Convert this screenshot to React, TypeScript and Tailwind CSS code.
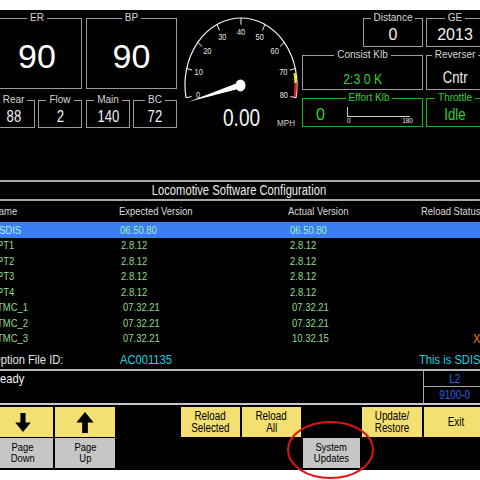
import React from 'react';

// Reusable bordered panel with a centred caption in the top border
type BoxProps = {
  label: string;
  className?: string;
  inner?: string;
  green?: boolean;
  children?: React.ReactNode;
};

const Box = ({ label, className = '', inner = 'items-center justify-center', green, children }: BoxProps) => (
  <fieldset
    className={`flex flex-col border ${green ? 'border-[#1fb21f]' : 'border-[#9c9c9c]'} ${inner} ${className}`}
  >
    <legend
      className={`mx-auto whitespace-nowrap px-[3px] text-[10px] leading-[12px] ${green ? 'text-[#2fd42f]' : 'text-[#d6d6d6]'}`}
    >
      {label}
    </legend>
    {children}
  </fieldset>
);

// the panel font is a narrow sans, so texts are squeezed sideways
const sq = 'inline-block whitespace-nowrap origin-left scale-x-[0.86]';
const sqc = 'inline-block whitespace-nowrap scale-x-[0.82]';

const CX = 241;
const CY = 85;
const RX = 56;
const RY = 67;

const pt = (v: number, k: number) => {
  const a = ((191 - v * 2.525) * Math.PI) / 180;
  return [CX + RX * k * Math.cos(a), CY - RY * k * Math.sin(a)];
};

const Gauge = () => {
  const marks = [0, 10, 20, 30, 40, 50, 60, 70, 80];
  const [sx, sy] = pt(0, 1);
  const [ex, ey] = pt(80, 1);
  const [y1x, y1y] = pt(71.5, 0.975);
  const [y2x, y2y] = pt(75, 0.975);
  const [r2x, r2y] = pt(80, 0.975);
  return (
    <div className="flex w-[125px] flex-col">
      <svg width="125" height="94" viewBox="177 12 125 94">
        <path d={`M${sx} ${sy} A${RX} ${RY} 0 1 1 ${ex} ${ey}`} fill="none" stroke="#f2f2f2" strokeWidth="1.2" />
        <path d={`M${y1x} ${y1y} A${RX * 0.975} ${RY * 0.975} 0 0 1 ${y2x} ${y2y}`} fill="none" stroke="#f5e52a" strokeWidth="2.4" />
        <path d={`M${y2x} ${y2y} A${RX * 0.975} ${RY * 0.975} 0 0 1 ${r2x} ${r2y}`} fill="none" stroke="#e41b1b" strokeWidth="2.4" />
        {marks.map((m) => {
          const [ax, ay] = pt(m, 1);
          const [bx, by] = pt(m, 0.9);
          const [tx, ty] = pt(m, 0.78);
          return (
            <g key={m}>
              <line x1={ax} y1={ay} x2={bx} y2={by} stroke="#f2f2f2" strokeWidth="1" />
              <text
                x="0"
                y="0"
                transform={`translate(${tx} ${ty}) scale(0.82 1)`}
                fill="#e8e8e8"
                fontSize="9"
                textAnchor="middle"
                dominantBaseline="central"
                fontFamily="'Liberation Sans',sans-serif"
              >
                {m}
              </text>
            </g>
          );
        })}
        <polygon points="188,102 240.1,82.1 241.9,87.9" fill="#ffffff" />
        <ellipse cx="240.5" cy="85.5" rx="5" ry="6" fill="#ffffff" />
      </svg>
      <div className="flex items-baseline pl-[46px] text-[#f4f4f4]">
        <span className="inline-block origin-left scale-x-[0.83] text-[23px] leading-[24px]">0.00</span>
        <span className="ml-[9px] inline-block origin-left scale-x-[0.9] text-[9px] text-[#d8d8d8]">MPH</span>
      </div>
    </div>
  );
};

const rows = [
  { name: 'PT1', exp: '2.8.12', act: '2.8.12', pad: 'pl-[2px]' },
  { name: 'PT2', exp: '2.8.12', act: '2.8.12', pad: 'pl-[2px]' },
  { name: 'PT3', exp: '2.8.12', act: '2.8.12', pad: 'pl-[2px]' },
  { name: 'PT4', exp: '2.8.12', act: '2.8.12', pad: 'pl-[2px]' },
  { name: 'TMC_1', exp: '07.32.21', act: '07.32.21', pad: 'pl-[4px]' },
  { name: 'TMC_2', exp: '07.32.21', act: '07.32.21', pad: 'pl-[4px]' },
  { name: 'TMC_3', exp: '07.32.21', act: '10.32.15', pad: 'pl-[4px]', status: 'X' },
];

const cols = 'grid grid-cols-[127px_169px_133px_1fr]';

const DownArrow = () => (
  <svg width="20" height="19" viewBox="0 0 20 22">
    <path d="M7 0h6v11h6l-9 11-9-11h6z" fill="#000" />
  </svg>
);

const UpArrow = () => (
  <svg width="20" height="21" viewBox="0 0 20 22">
    <path d="M10 0l9 11h-6v11H7V11H1z" fill="#000" />
  </svg>
);

const Yellow = ({ children }: { children: React.ReactNode }) => (
  <div className="flex flex-col items-center justify-center bg-[#f4df72] text-center text-[12px] leading-[12px] text-black">
    {children}
  </div>
);

const Gray = ({ children }: { children: React.ReactNode }) => (
  <div className="flex flex-col items-center justify-center bg-[#c6c6c6] text-center text-[11.5px] leading-[11.5px] text-black">
    {children}
  </div>
);

export default function App() {
  return (
    <div className="relative h-[480px] w-[480px] overflow-hidden bg-white font-['Liberation_Sans',Arial,sans-serif]">
      <div className="mt-[10px] h-[460px] overflow-hidden bg-black">
        <div className="ml-[-8px] w-[493px]">
          {/* gauges and readouts */}
          <div className="flex h-[170px] items-start pt-[2px]">
            <div className="flex w-[185px] flex-col gap-[5px]">
              <div className="flex gap-[4px]">
                <Box label="ER" className="h-[77px] w-[90px]">
                  <span className="text-[34px] leading-none text-white">90</span>
                </Box>
                <Box label="BP" className="h-[77px] w-[91px]">
                  <span className="text-[34px] leading-none text-white">90</span>
                </Box>
              </div>
              <div className="flex text-[16px] leading-none text-[#f0f0f0]">
                <Box label="Rear" className="h-[34px] w-[43px]">
                  <span className={sqc}>88</span>
                </Box>
                <Box label="Flow" className="ml-[3px] h-[34px] w-[44px]">
                  <span className={sqc}>2</span>
                </Box>
                <Box label="Main" className="ml-[4px] h-[34px] w-[44px]">
                  <span className={sqc}>140</span>
                </Box>
                <Box label="BC" className="ml-[3px] h-[34px] w-[44px]">
                  <span className={sqc}>72</span>
                </Box>
              </div>
            </div>

            <Gauge />

            <div className="flex w-[183px] flex-col gap-[2px] text-[#f0f0f0]">
              <div className="flex gap-[3px] pl-[61px] text-[16px] leading-none">
                <Box label="Distance" className="h-[35px] w-[60px]">0</Box>
                <Box label="GE" className="h-[35px] w-[58px]">2013</Box>
              </div>
              <div className="flex gap-[3px] leading-none">
                <Box label="Consist Klb" className="h-[41px] w-[121px]" inner="items-center justify-end pb-[3px]">
                  <span className={`${sqc} text-[15px] text-[#2fd42f]`}>2:3 0 K</span>
                </Box>
                <Box label="Reverser" className="h-[41px] w-[58px]" inner="items-center justify-end pb-[3px]">
                  <span className={`${sqc} text-[16px]`}>Cntr</span>
                </Box>
              </div>
              <div className="flex gap-[3px] leading-none">
                <Box label="Effort Klb" green className="h-[35px] w-[121px]" inner="flex-row items-center justify-start pl-[13px]">
                  <span className="text-[16px] text-[#2fd42f]">0</span>
                  <svg className="ml-[22px]" width="68" height="18" viewBox="0 0 68 18">
                    <line x1="0.5" y1="1" x2="0.5" y2="11" stroke="#d0d0d0" strokeWidth="1" />
                    <line x1="0.5" y1="10.5" x2="63" y2="10.5" stroke="#d0d0d0" strokeWidth="1.2" />
                    <text x="0" y="17" fill="#e0e0e0" fontSize="6.5" fontFamily="'Liberation Sans',sans-serif">0</text>
                    <text x="66" y="17" fill="#e0e0e0" fontSize="6.5" textAnchor="end" fontFamily="'Liberation Sans',sans-serif">180</text>
                  </svg>
                </Box>
                <Box label="Throttle" green className="h-[35px] w-[58px]">
                  <span className={`${sqc} text-[16px] text-[#2fd42f]`}>Idle</span>
                </Box>
              </div>
            </div>
          </div>

          {/* software configuration table */}
          <div className="h-[2px] bg-[#a8a8a8]" />
          <div className="flex h-[17px] items-center justify-center text-[14px] text-[#ececec]">
            <span className="inline-block whitespace-nowrap scale-x-[0.8]">Locomotive Software Configuration</span>
          </div>
          <div className="h-[2px] bg-[#a8a8a8]" />
          <div className={`${cols} h-[21px] items-center text-[11px] leading-none text-[#dadada]`}>
            <span className={sq}>Name</span>
            <span className={sq}>Expected Version</span>
            <span className={sq}>Actual Version</span>
            <span className={sq}>Reload Status</span>
          </div>
          <div className={`${cols} h-[16px] items-center bg-[#3a7ef2] text-[11px] leading-none`}>
            <span className="pl-[7px]">
              <span className={`${sq} text-[#b4f4dc]`}>SDIS</span>
            </span>
            <span className="pl-[1px]">
              <span className={`${sq} text-[#a8f0a8]`}>06.50.80</span>
            </span>
            <span className="pl-[2px]">
              <span className={`${sq} text-[#a8f0a8]`}>06.50.80</span>
            </span>
            <span />
          </div>
          {rows.map((r) => (
            <div key={r.name} className={`${cols} h-[15.5px] items-center text-[11px] leading-none text-[#8fdc8f]`}>
              <span className="pl-[5px]">
                <span className={sq}>{r.name}</span>
              </span>
              <span className={r.pad}>
                <span className={sq}>{r.exp}</span>
              </span>
              <span className={r.pad}>
                <span className={sq}>{r.act}</span>
              </span>
              <span className="pl-[52px] text-[13px] text-[#f07a1e]">
                <span className={sq}>{r.status}</span>
              </span>
            </div>
          ))}
          <div className={`${cols} h-[22.5px] items-center pt-[3px] text-[13px] leading-none`}>
            <span className={`${sq} text-[#e4e4e4]`}>Option File ID:</span>
            <span className="pl-[1px] text-[#18d4e4]">
              <span className={sq}>AC001135</span>
            </span>
            <span />
            <span className="ml-[-2px] text-[#18d4e4]">
              <span className={sq}>This is SDIS</span>
            </span>
          </div>
          <div className="h-[2px] bg-[#b4b4b4]" />

          {/* status line */}
          <div className="flex h-[32px]">
            <div className="flex-1 text-[13px] leading-[15px] text-[#f0f0f0]">
              <span className={sq}>Ready</span>
            </div>
            <div className="flex w-[62px] flex-col border-l border-[#a8a8a8] text-[12px] leading-none text-[#2d62f0]">
              <div className="flex h-[16px] items-center justify-center border-b border-[#a8a8a8]">
                <span className={sqc}>L2</span>
              </div>
              <div className="flex flex-1 items-center justify-center">
                <span className={sqc}>9100-0</span>
              </div>
            </div>
          </div>
          <div className="h-[2px] bg-[#c8c8c8]" />

          {/* soft keys */}
          <div className="grid grid-cols-[61px_60px_62px_59px_59px_57px_60px_64px] grid-rows-[30px_30px] gap-x-[2px] gap-y-[1px] pt-[2px]">
            <Yellow>
              <DownArrow />
            </Yellow>
            <Yellow>
              <UpArrow />
            </Yellow>
            <div />
            <Yellow>
              <span className={sqc}>Reload</span>
              <span className={sqc}>Selected</span>
            </Yellow>
            <Yellow>
              <span className={sqc}>Reload</span>
              <span className={sqc}>All</span>
            </Yellow>
            <div />
            <Yellow>
              <span className={sqc}>Update/</span>
              <span className={sqc}>Restore</span>
            </Yellow>
            <Yellow>
              <span className={sqc}>Exit</span>
            </Yellow>

            <Gray>
              <span className={sqc}>Page</span>
              <span className={sqc}>Down</span>
            </Gray>
            <Gray>
              <span className={sqc}>Page</span>
              <span className={sqc}>Up</span>
            </Gray>
            <div />
            <div />
            <div />
            <Gray>
              <span className={sqc}>System</span>
              <span className={sqc}>Updates</span>
            </Gray>
            <div />
            <div />
          </div>
        </div>
      </div>

      {/* red annotation ring */}
      <svg className="pointer-events-none absolute left-[286px] top-[420px]" width="90" height="60" viewBox="286 420 90 60">
        <ellipse cx="330.5" cy="450" rx="42.5" ry="28" fill="none" stroke="#e01414" strokeWidth="2" />
      </svg>
    </div>
  );
}
